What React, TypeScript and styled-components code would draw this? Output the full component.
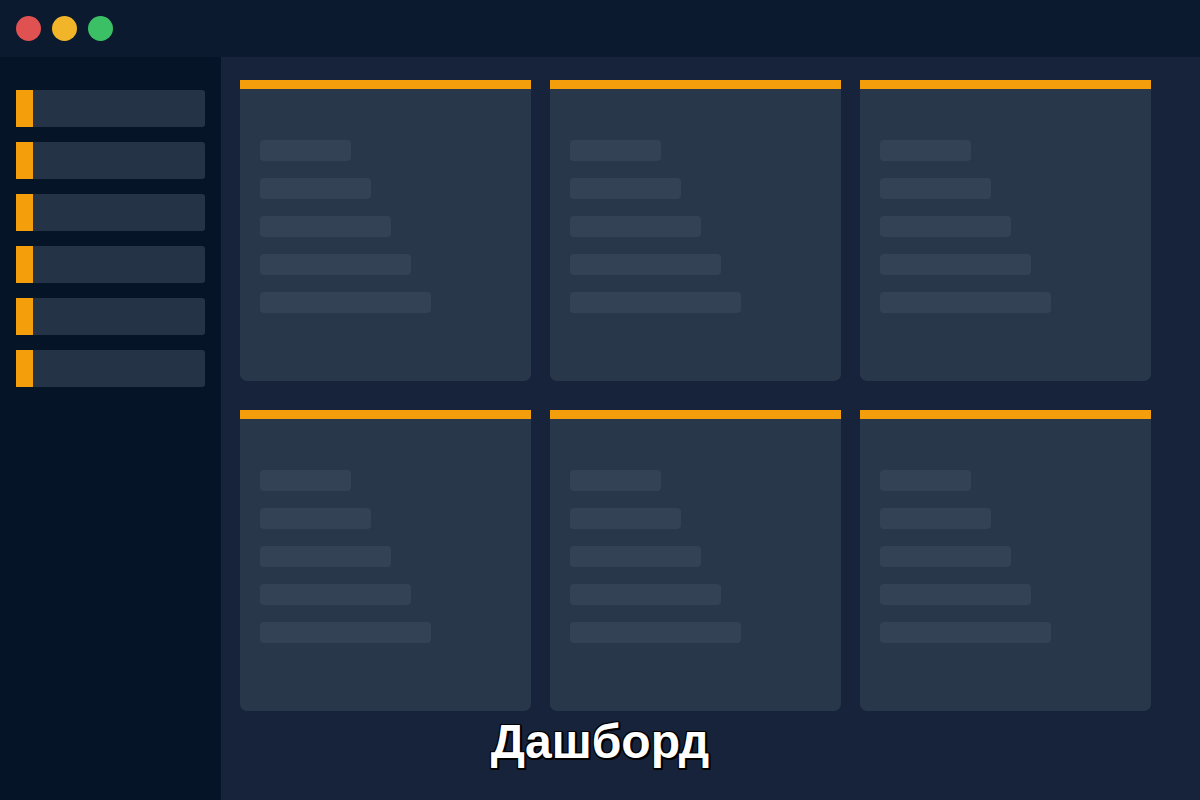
import React from 'react'
import styled, { createGlobalStyle } from 'styled-components'

const GlobalStyle = createGlobalStyle`
  html, body {
    margin: 0;
    padding: 0;
    background: #16233a;
    font-family: 'Liberation Sans', Arial, sans-serif;
  }
  * { box-sizing: border-box; }
`

const Window = styled.div`
  position: relative;
  width: 1200px;
  height: 800px;
  display: flex;
  flex-direction: column;
  overflow: hidden;
`

const TitleBar = styled.header`
  height: 57px;
  flex-shrink: 0;
  background: #0b1a2e;
  display: flex;
  align-items: center;
  gap: 11px;
  padding: 0 0 1px 16px;
`

const Light = styled.span<{ $color: string }>`
  width: 25px;
  height: 25px;
  border-radius: 50%;
  background: ${(p) => p.$color};
`

const Body = styled.div`
  flex: 1;
  display: flex;
`

const Sidebar = styled.nav`
  width: 221px;
  flex-shrink: 0;
  background: #061428;
  padding: 33px 16px 0;
  display: flex;
  flex-direction: column;
  gap: 15px;
`

const NavItem = styled.div`
  height: 37px;
  width: 189px;
  background: #253346;
  border-left: 17px solid #f59e0b;
  border-radius: 0 3px 3px 0;
`

const Main = styled.main`
  flex: 1;
  padding: 23px 0 0 19px;
`

const Grid = styled.div`
  display: grid;
  grid-template-columns: repeat(3, 291px);
  grid-auto-rows: 301px;
  column-gap: 19px;
  row-gap: 29px;
`

const Card = styled.section`
  background: #29374b;
  border-top: 9px solid #f59e0b;
  border-radius: 0 0 7px 7px;
  padding: 51px 20px 0;
  display: flex;
  flex-direction: column;
  gap: 17px;
`

const Line = styled.div<{ $width: number }>`
  width: ${(p) => p.$width}px;
  height: 21px;
  border-radius: 4px;
  background: #344256;
`

const Caption = styled.h1`
  position: absolute;
  left: 0;
  right: 0;
  top: 714px;
  margin: 0;
  text-align: center;
  font-family: 'Liberation Sans', Arial, sans-serif;
  font-weight: 700;
  font-size: 48px;
  color: #ffffff;
  text-shadow: 2px 2px 0 #000, -1px -1px 0 #000, 1px -1px 0 #000, -1px 1px 0 #000, 2px 0 0 #000, 0 2px 0 #000;
`

const lights = ['#e05252', '#f2b52a', '#3cc065']
const lineWidths = [91, 111, 131, 151, 171]

export default function App() {
  return (
    <Window>
      <GlobalStyle />
      <TitleBar>
        {lights.map((c) => (
          <Light key={c} $color={c} />
        ))}
      </TitleBar>
      <Body>
        <Sidebar>
          {Array.from({ length: 6 }).map((_, i) => (
            <NavItem key={i} />
          ))}
        </Sidebar>
        <Main>
          <Grid>
            {Array.from({ length: 6 }).map((_, i) => (
              <Card key={i}>
                {lineWidths.map((w) => (
                  <Line key={w} $width={w} />
                ))}
              </Card>
            ))}
          </Grid>
        </Main>
      </Body>
      <Caption>Дашборд</Caption>
    </Window>
  )
}
